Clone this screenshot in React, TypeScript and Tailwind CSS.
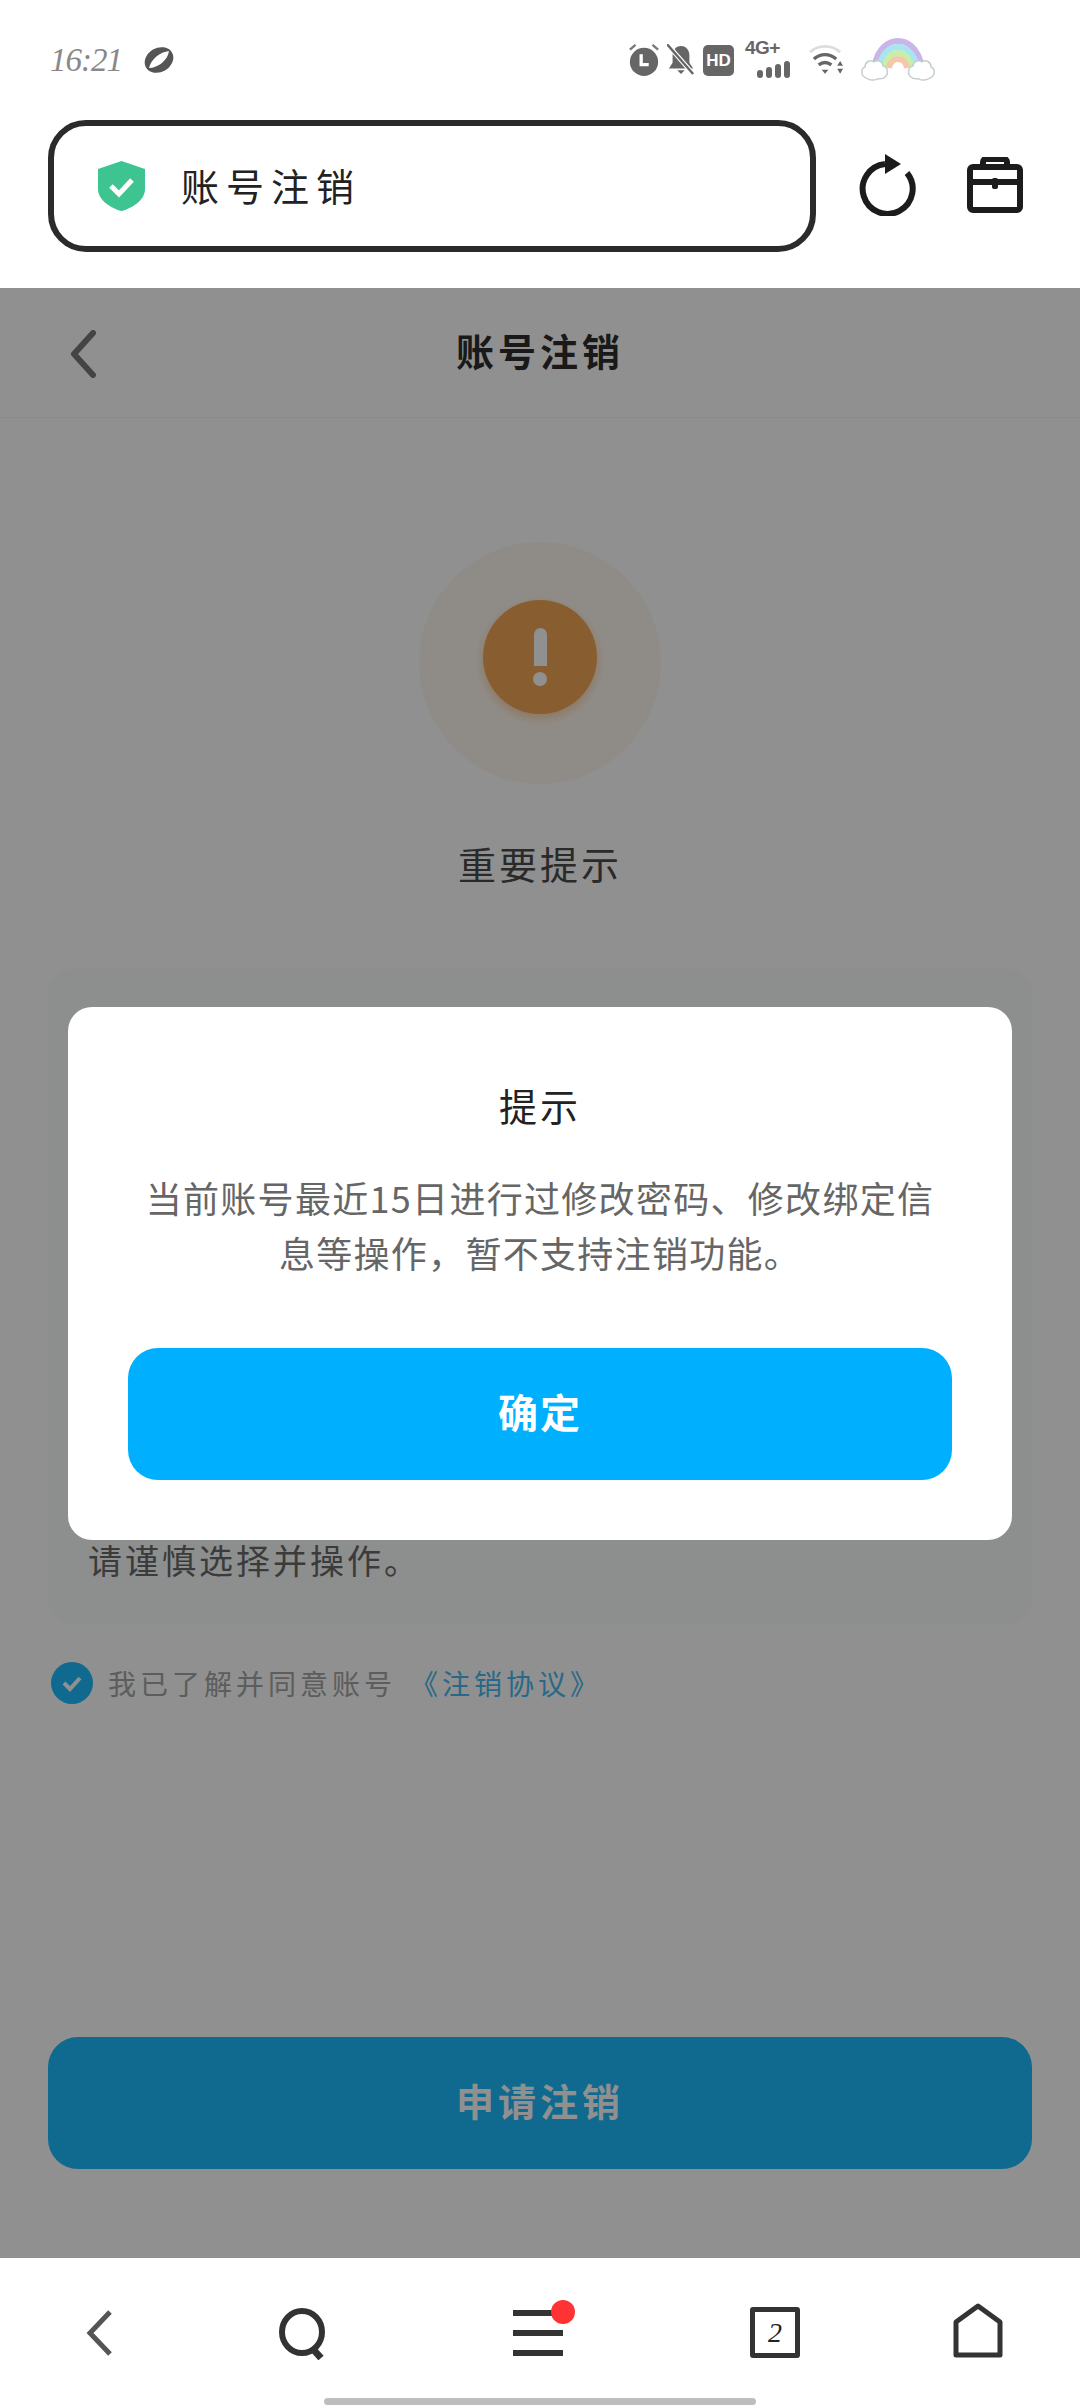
import React from 'react';

const cjk = 'font-["Noto_Sans_CJK_SC","Noto_Sans",sans-serif]';

const StatusIcons = () => (
  <div className="flex items-center ml-auto mr-[144px] h-[44px]">
    <svg width="32" height="34" viewBox="0 0 34 36" className="mr-[7px]">
      <circle cx="17" cy="20" r="15" fill="#666" />
      <path d="M14 12v11h8" fill="none" stroke="#fff" strokeWidth="3.500" />
      <path d="M2 7l6-5M32 7l-6-5" stroke="#777" strokeWidth="2.500" />
    </svg>
    <svg width="28" height="32" viewBox="0 0 30 34" className="mr-[8px]">
      <path d="M15 2c6 0 9 5 9 10v8l4 6H2l4-6v-8c0-5 3-10 9-10z" fill="#666" />
      <path d="M11 28h8l-4 4z" fill="#666" />
      <path d="M1 1l27 31" stroke="#fff" strokeWidth="5" />
      <path d="M0 0l28 32" stroke="#666" strokeWidth="2.500" />
    </svg>
    <div className="flex items-center justify-center w-[31px] h-[31px] rounded-[5px] bg-[#666] text-white text-[17px] leading-none font-bold font-['Liberation_Sans',sans-serif] mr-[11px]">HD</div>
    <div className="relative w-[48px] h-[36px] mr-[15px]">
      <span className="absolute left-0 top-[-4px] text-[19px] leading-[20px] font-bold tracking-[-0.5px] text-[#666] font-['Liberation_Sans',sans-serif]">4G+</span>
      <div className="absolute left-[12px] bottom-0 flex items-end gap-[3px]">
        <span className="w-[6px] h-[8px] rounded-full bg-[#666]" />
        <span className="w-[6px] h-[11px] rounded-full bg-[#666]" />
        <span className="w-[6px] h-[14px] rounded-full bg-[#666]" />
        <span className="w-[6px] h-[17px] rounded-full bg-[#666]" />
      </div>
    </div>
    <svg width="37" height="34" viewBox="0 0 38 34" className="mr-[15px]">
      <path d="M2 9c9-8 22-8 31 0" fill="none" stroke="#ddd" strokeWidth="3" />
      <path d="M6 16c7-6 16-6 23 0" fill="none" stroke="#666" strokeWidth="3.500" />
      <path d="M11 22c4-3 9-3 13 0" fill="none" stroke="#666" strokeWidth="3.500" />
      <path d="M14 27h7l-3.500 4z" fill="#666" />
      <path d="M33 18l3 5h-6zM33 31l3-5h-6z" fill="#666" />
    </svg>
    <svg width="76" height="44" viewBox="0 0 76 44">
      <path d="M14 30C18 8 30 3 38 3s20 5 24 27" fill="none" stroke="#c9b5e8" strokeWidth="6" />
      <path d="M19 30C22 14 31 9 38 9s16 5 19 21" fill="none" stroke="#a9e4f2" strokeWidth="6" />
      <path d="M24 30c2-10 8-15 14-15s12 5 14 15" fill="none" stroke="#c8efa8" strokeWidth="6" />
      <path d="M29 30c1-6 5-9 9-9s8 3 9 9" fill="none" stroke="#f6c6a8" strokeWidth="6" />
      <path d="M6 40c-5-2-6-9-1-11 0-5 5-8 9-5 4-3 9 0 9 4 5 1 6 8 2 11-3 3-6 1-8 2-3 2-8 1-11-1z" fill="#fff" stroke="#c5d0cc" strokeWidth="1.500" />
      <path d="M70 40c5-2 6-9 1-11 0-5-5-8-9-5-4-3-9 0-9 4-5 1-6 8-2 11 3 3 6 1 8 2 3 2 8 1 11-1z" fill="#fff" stroke="#c5d0cc" strokeWidth="1.500" />
    </svg>
  </div>
);

export default function App() {
  return (
    <div className={`flex flex-col w-[1080px] h-[2408px] bg-white overflow-hidden ${cjk}`}>
      {/* status bar */}
      <div className="flex items-center h-[120px] pl-[50px]">
        <span className="text-[33px] leading-none italic font-light tracking-[-1px] text-[#888] font-['Liberation_Serif',serif]">16:21</span>
        <svg width="34" height="30" viewBox="0 0 34 30" className="ml-[20px]">
          <ellipse cx="17" cy="15" rx="15" ry="12" fill="#555" transform="rotate(-30 17 15)" />
          <path d="M7 23C9 14 18 7 27 6C26 15 16 23 7 23z" fill="#fff" />
        </svg>
        <StatusIcons />
      </div>

      {/* address bar */}
      <div className="flex items-start h-[168px]">
        <div className="flex items-center w-[768px] h-[132px] ml-[48px] pl-[44px] border-[6px] border-[#2b2b2b] rounded-[38px]">
          <svg width="47" height="50" viewBox="0 0 47 50">
            <path d="M23.500 0L47 8v20c0 11-12 19-23.500 22C12 47 0 39 0 28V8z" fill="#3ec491" />
            <path d="M13 25l8 8 13-14" fill="none" stroke="#fff" strokeWidth="5" />
          </svg>
          <span className="ml-[36px] mb-[3px] text-[38px] leading-none tracking-[7px] text-[#222]">账号注销</span>
        </div>
        <svg width="58" height="62" viewBox="0 0 58 62" className="ml-[43px] mt-[34px]">
          <path d="M48 19A25 25 0 1 1 26 10" fill="none" stroke="#1c1c1c" strokeWidth="6" />
          <path d="M26 0l16 10-16 10z" fill="#1c1c1c" />
        </svg>
        <svg width="56" height="56" viewBox="0 0 56 56" className="ml-[50px] mt-[37px]">
          <path d="M16 11V5a3 3 0 0 1 3-3h18a3 3 0 0 1 3 3v6" fill="none" stroke="#1c1c1c" strokeWidth="6" />
          <rect x="3" y="10" width="50" height="43" rx="3" fill="none" stroke="#1c1c1c" strokeWidth="6" />
          <path d="M3 25h50" stroke="#1c1c1c" strokeWidth="6" />
          <rect x="25" y="21" width="6" height="11" rx="2" fill="#1c1c1c" />
        </svg>
      </div>

      {/* page under the dialog */}
      <div className="relative flex flex-col flex-1 bg-white">
        <div className="relative flex items-center justify-center h-[130px] pb-[6px] border-b border-[#f5f5f5]">
          <svg width="28" height="48" viewBox="0 0 28 48" className="absolute left-[69px] top-[42px]">
            <path d="M24 3L5 24l19 21" fill="none" stroke="#666" strokeWidth="6" strokeLinecap="round" strokeLinejoin="round" />
          </svg>
          <span className="text-[38px] leading-none font-bold tracking-[4px] text-[#111]">账号注销</span>
        </div>

        <div className="flex justify-center mt-[124px]">
          <div className="flex items-center justify-center w-[242px] h-[242px] rounded-full bg-[#fff6ef]">
            <div className="flex flex-col items-center justify-center gap-[6px] w-[114px] h-[114px] rounded-full bg-[#f09a40] shadow-[0_4px_10px_rgba(245,162,74,0.5)] mb-[12px]">
              <span className="w-[13px] h-[38px] rounded-t-full rounded-b-[5px] bg-white" />
              <span className="w-[14px] h-[14px] rounded-full bg-white" />
            </div>
          </div>
        </div>
        <div className="mt-[54px] mb-[2px] text-center text-[38px] leading-[50px] tracking-[3px] text-[#333]">重要提示</div>

        <div className="flex flex-col justify-end h-[655px] mt-[79px] mx-[48px] px-[40px] pb-[37px] rounded-[24px] bg-[#fafafd]">
          <p className="text-[34px] leading-[55px] tracking-[3px] text-[#555]">请谨慎选择并操作。</p>
        </div>

        <div className="flex items-center mt-[38px] ml-[51px] h-[42px]">
          <div className="flex items-center justify-center w-[42px] h-[42px] rounded-full bg-[#00b0ff]">
            <svg width="24" height="20" viewBox="0 0 24 20">
              <path d="M4 10l6 6L20 5" fill="none" stroke="#fff" strokeWidth="4" />
            </svg>
          </div>
          <span className="ml-[15px] text-[28px] leading-none tracking-[4px] text-[#999]">我已了解并同意账号</span>
          <span className="ml-[14px] text-[28px] leading-none tracking-[4px] text-[#30aef0]">《注销协议》</span>
        </div>

        <div className="flex items-center justify-center h-[132px] mt-auto mb-[89px] mx-[48px] pb-[6px] rounded-[30px] bg-[#00b0ff] text-white text-[38px] leading-none font-bold tracking-[4px]">申请注销</div>

        {/* dim layer */}
        <div className="absolute inset-0 bg-[#202120]/50" />

        {/* dialog */}
        <div className="absolute left-[68px] top-[719px] flex flex-col w-[944px] pt-[73px] px-[60px] pb-[60px] rounded-[24px] bg-white text-center">
          <div className="text-[38px] leading-[50px] tracking-[3px] text-[#222]">提示</div>
          <p className="mt-[40px] text-[36px] leading-[55px] tracking-[1.300px] text-[#666] whitespace-nowrap">
            当前账号最近15日进行过修改密码、修改绑定信<br />息等操作，暂不支持注销功能。
          </p>
          <div className="flex items-center justify-center h-[132px] mt-[68px] pb-[6px] rounded-[30px] bg-[#00b0ff] text-white text-[40px] leading-none font-bold tracking-[2px]">确定</div>
        </div>
      </div>

      {/* bottom toolbar */}
      <div className="relative flex items-start h-[150px] pl-[86px] pt-[45px]">
        <svg width="26" height="46" viewBox="0 0 26 46" className="mt-[7px]">
          <path d="M24 2L4 23l20 21" fill="none" stroke="#555" strokeWidth="5" />
        </svg>
        <svg width="50" height="52" viewBox="0 0 50 52" className="ml-[167px] mt-[5px]">
          <ellipse cx="23" cy="24" rx="20" ry="21" fill="none" stroke="#333" strokeWidth="6" />
          <path d="M33 40l9 10" stroke="#333" strokeWidth="7" />
        </svg>
        <div className="relative flex flex-col justify-between w-[50px] h-[46px] ml-[184px] mt-[7px]">
          <span className="h-[6px] bg-[#333]" />
          <span className="h-[6px] bg-[#333]" />
          <span className="h-[6px] bg-[#333]" />
          <span className="absolute right-[-12px] top-[-10px] w-[24px] h-[24px] rounded-full bg-[#ff3333]" />
        </div>
        <div className="flex items-center justify-center w-[50px] h-[51px] ml-[187px] mt-[4px] border-[5px] border-[#333] rounded-[3px] text-[28px] leading-none text-[#222] font-['Liberation_Serif',serif] italic">2</div>
        <svg width="50" height="56" viewBox="0 0 50 56" className="ml-[153px]">
          <path d="M3 19L25 3l22 16v33H3z" fill="none" stroke="#333" strokeWidth="5" strokeLinejoin="round" />
        </svg>
        <span className="absolute left-[324px] bottom-[3px] w-[432px] h-[7px] rounded-full bg-[#bdbdbd]" />
      </div>
    </div>
  );
}
